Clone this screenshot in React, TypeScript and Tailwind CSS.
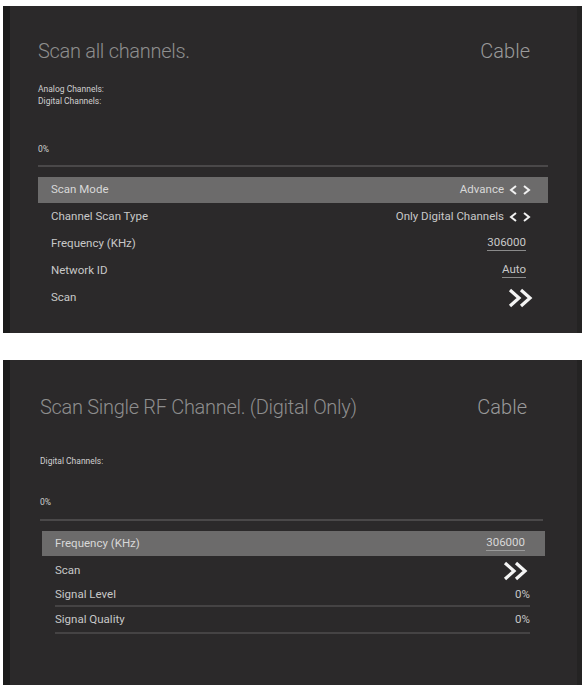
import React from "react";

const font = { fontFamily: "Roboto, 'Noto Sans', sans-serif" };

function LR() {
  return (
    <svg width="22" height="12" viewBox="0 0 22 12" className="ml-[5px]">
      <polyline points="7,2 2,6 7,10" fill="none" stroke="#f2f2f2" strokeWidth="2" />
      <polyline points="15,2 20,6 15,10" fill="none" stroke="#f2f2f2" strokeWidth="2" />
    </svg>
  );
}

function Go() {
  return (
    <svg width="28" height="22" viewBox="0 0 28 22">
      <polyline points="3,3 12,11 3,19" fill="none" stroke="#f4f4f4" strokeWidth="3.2" />
      <polyline points="14,3 23,11 14,19" fill="none" stroke="#f4f4f4" strokeWidth="3.2" />
    </svg>
  );
}

function Panel1() {
  return (
    <div className="mt-[6px] ml-[3px] w-[579px] h-[327px] bg-[#2b292a] border-l-[7px] border-l-[#1b1b1b] border-r-[5px] border-r-[#242323] pl-[28px] pr-[29px] pt-[33px] flex flex-col">
      <div className="flex justify-between items-center h-[24px] pr-[18px]">
        <span className="text-[20px] font-light text-[#8e8e8e] tracking-[-0.3px]">Scan all channels.</span>
        <span className="text-[20px] font-light text-[#9a9a9a]">Cable</span>
      </div>
      <div className="mt-[20px] text-[8.5px] leading-[12px] text-[#cfcfcf]">
        <div>Analog Channels:</div>
        <div>Digital Channels:</div>
      </div>
      <div className="mt-[36px] text-[8.5px] leading-[12px] text-[#cfcfcf]">0%</div>
      <div className="mt-[10px] h-[2px] bg-[#4a4849]" />
      <div className="mt-[10px] flex flex-col text-[11.5px] text-[#c8c8c8]">
        <div className="h-[26px] bg-[#6c6b6b] flex items-center justify-between pl-[13px] pr-[17px] text-[#d8d8d8]">
          <span>Scan Mode</span>
          <span className="flex items-center">Advance<LR /></span>
        </div>
        <div className="h-[27px] flex items-center justify-between pl-[13px] pr-[17px]">
          <span>Channel Scan Type</span>
          <span className="flex items-center">Only Digital Channels<LR /></span>
        </div>
        <div className="h-[27px] flex items-center justify-between pl-[13px] pr-[22px]">
          <span>Frequency (KHz)</span>
          <span className="border-b border-[#8a8a8a] leading-[13px] pb-[1px]">306000</span>
        </div>
        <div className="h-[27px] flex items-center justify-between pl-[13px] pr-[22px]">
          <span>Network ID</span>
          <span className="border-b border-[#8a8a8a] leading-[13px] pb-[1px]">Auto</span>
        </div>
        <div className="h-[27px] flex items-center justify-between pl-[13px] pr-[13px]">
          <span>Scan</span>
          <Go />
        </div>
      </div>
    </div>
  );
}

function Panel2() {
  return (
    <div className="mt-[27px] ml-[3px] w-[579px] h-[325px] bg-[#2b292a] border-l-[7px] border-l-[#1b1b1b] border-r-[5px] border-r-[#242323] pl-[30px] pr-[34px] pt-[35px] flex flex-col">
      <div className="flex justify-between items-center h-[24px] pr-[16px]">
        <span className="text-[20px] font-light text-[#8e8e8e] tracking-[-0.3px]">Scan Single RF Channel. (Digital Only)</span>
        <span className="text-[20px] font-light text-[#9a9a9a]">Cable</span>
      </div>
      <div className="mt-[36px] text-[8.5px] leading-[12px] text-[#cfcfcf]">Digital Channels:</div>
      <div className="mt-[29px] text-[8.5px] leading-[12px] text-[#cfcfcf]">0%</div>
      <div className="mt-[11px] h-[2px] bg-[#4a4849]" />
      <div className="mt-[10px] flex flex-col text-[11.5px] text-[#c8c8c8] -mr-[2px] ml-[2px]">
        <div className="h-[25px] bg-[#6c6b6b] flex items-center justify-between pl-[13px] pr-[20px] text-[#d8d8d8]">
          <span>Frequency (KHz)</span>
          <span className="border-b border-[#9a9a9a] leading-[13px] pb-[1px]">306000</span>
        </div>
        <div className="h-[29px] flex items-center justify-between pl-[13px] pr-[15px]">
          <span>Scan</span>
          <Go />
        </div>
        <div className="ml-[13px] mr-[15px] h-[22px] flex items-center justify-between border-b-2 border-[#454344]">
          <span>Signal Level</span>
          <span>0%</span>
        </div>
        <div className="ml-[13px] mr-[15px] h-[27px] flex items-center justify-between border-b-2 border-[#454344]">
          <span>Signal Quality</span>
          <span>0%</span>
        </div>
      </div>
    </div>
  );
}

export default function App() {
  return (
    <div className="w-[584px] h-[685px] bg-white overflow-hidden" style={font}>
      <Panel1 />
      <Panel2 />
    </div>
  );
}
